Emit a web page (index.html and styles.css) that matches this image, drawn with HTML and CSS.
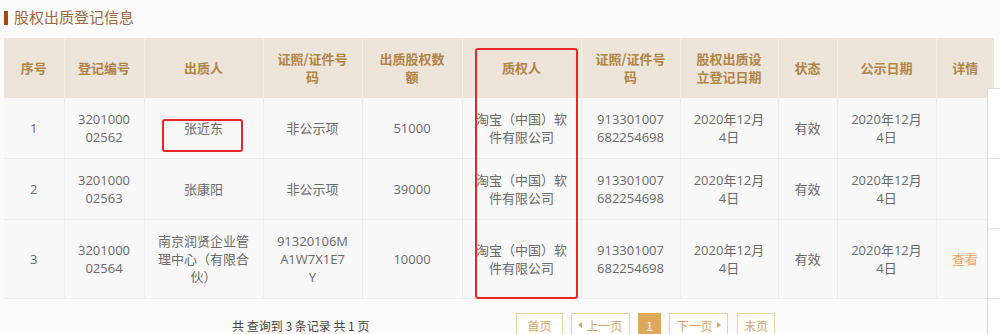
FILE: index.html
```html
<!DOCTYPE html>
<html lang="zh-CN">
<head>
<meta charset="utf-8">
<title>股权出质登记信息</title>
<link rel="stylesheet" href="styles.css">
</head>
<body>
<div class="page">
  <h2 class="title"><span class="bar"></span>股权出质登记信息</h2>
  <table class="grid">
    <colgroup>
      <col style="width:60px"><col style="width:80px"><col style="width:119px"><col style="width:99px"><col style="width:100px"><col style="width:119px"><col style="width:99px"><col style="width:98px"><col style="width:59px"><col style="width:99px"><col style="width:58px">
    </colgroup>
    <thead>
      <tr>
        <th>序号</th><th>登记编号</th><th>出质人</th><th>证照/证件号<br>码</th><th>出质股权数<br>额</th><th>质权人</th><th>证照/证件号<br>码</th><th>股权出质设<br>立登记日期</th><th>状态</th><th>公示日期</th><th>详情</th>
      </tr>
    </thead>
    <tbody>
      <tr>
        <td>1</td><td>3201000<br>02562</td><td>张近东</td><td>非公示项</td><td>51000</td><td>淘宝（中国）软<br>件有限公司</td><td>913301007<br>682254698</td><td>2020年12月<br>4日</td><td>有效</td><td>2020年12月<br>4日</td><td></td>
      </tr>
      <tr>
        <td>2</td><td>3201000<br>02563</td><td>张康阳</td><td>非公示项</td><td>39000</td><td>淘宝（中国）软<br>件有限公司</td><td>913301007<br>682254698</td><td>2020年12月<br>4日</td><td>有效</td><td>2020年12月<br>4日</td><td></td>
      </tr>
      <tr>
        <td>3</td><td>3201000<br>02564</td><td>南京润贤企业管<br>理中心（有限合<br>伙）</td><td>91320106M<br>A1W7X1E7<br>Y</td><td>10000</td><td>淘宝（中国）软<br>件有限公司</td><td>913301007<br>682254698</td><td>2020年12月<br>4日</td><td>有效</td><td>2020年12月<br>4日</td><td><a class="view" href="#">查看</a></td>
      </tr>
    </tbody>
  </table>
  <div class="footer">
    <span class="info">共 查询到 3 条记录 共 1 页</span>
    <div class="pager">
      <a class="btn btn-first" href="#">首页</a>
      <a class="btn btn-step" href="#"><span class="tri tri-l"></span>上一页</a>
      <a class="btn current" href="#">1</a>
      <a class="btn btn-step" href="#">下一页<span class="tri tri-r"></span></a>
      <a class="btn btn-last" href="#">末页</a>
    </div>
  </div>
</div>
<div class="side-panel">
  <div class="side-row"></div>
  <div class="side-row"></div>
  <div class="side-row"></div>
</div>
<div class="mark mark-person"></div>
<div class="mark mark-pledgee"></div>
</body>
</html>
```

FILE: styles.css
```css
html, body {
  margin: 0;
  padding: 0;
  background: #fbfbfb;
  font-family: "Open Sans", "Noto Sans CJK SC", sans-serif;
  color: #666;
  overflow: hidden;
}

.page {
  padding: 0 6px 0 4px;
}

.title {
  margin: 0;
  height: 38px;
  display: flex;
  align-items: flex-start;
  padding-top: 7px;
  box-sizing: border-box;
  font-size: 15px;
  font-weight: normal;
  color: #9a6a44;
  font-family: "Noto Sans CJK SC", sans-serif;
  line-height: 20px;
}

.title .bar {
  display: inline-block;
  width: 4px;
  height: 14px;
  margin-top: 4px;
  margin-right: 6px;
  background: #a24a10;
}

.grid {
  width: 990px;
  table-layout: fixed;
  border-collapse: collapse;
  font-size: 13px;
  line-height: 18px;
}

.grid th {
  background: #ede4da;
  color: #b08546;
  font-weight: bold;
  font-family: "Noto Sans CJK SC", sans-serif;
  height: 60px;
  padding: 0 6px;
  border-left: 1px solid #f5efe9;
  text-align: center;
  vertical-align: middle;
  box-sizing: border-box;
}

.grid th:first-child {
  border-left: none;
}

.grid td {
  background: #f8f8f8;
  color: #6a6a6a;
  padding: 12px 6px;
  border: 1px solid #ececec;
  border-top: none;
  text-align: center;
  vertical-align: middle;
}

.grid tbody tr:first-child td {
  height: 35px;
}

.grid td:first-child { border-left: none; }

.view {
  color: #f5a55a;
  text-decoration: none;
}

.footer {
  display: flex;
  align-items: center;
  margin-top: 14px;
  padding-left: 228px;
}

.info {
  font-size: 12px;
  color: #444;
  font-family: "Noto Sans CJK SC", sans-serif;
  width: 284px;
}

.pager {
  display: flex;
  gap: 8px;
}

.btn {
  display: flex;
  align-items: center;
  justify-content: center;
  height: 24px;
  padding: 0 8px;
  border: 1px solid #ebcfa7;
  color: #d4a566;
  background: #fff;
  font-size: 12px;
  font-family: "Noto Sans CJK SC", sans-serif;
  text-decoration: none;
  box-sizing: border-box;
}

.btn-first {
  width: 47px;
}

.btn-step {
  width: 59px;
  padding: 0;
}

.btn-last {
  width: 38px;
  padding: 0;
  margin-left: 1px;
}

.btn.current {
  background: #dca95c;
  border-color: #dca95c;
  color: #fff;
  width: 23px;
  padding: 0;
}

.tri {
  display: inline-block;
  width: 0;
  height: 0;
  border-top: 3px solid transparent;
  border-bottom: 3px solid transparent;
}

.tri-l {
  border-right: 4px solid #d4a566;
  margin-right: 4px;
}

.tri-r {
  border-left: 4px solid #d4a566;
  margin-left: 4px;
}

.side-panel {
  position: absolute;
  left: 987px;
  top: 88px;
  width: 20px;
  height: 260px;
  background: #fff;
  border-left: 1px solid #dadada;
  border-top: 1px solid #dadada;
}

.side-row {
  height: 69px;
  border-bottom: 1px solid #e6e6e6;
}

.mark {
  position: absolute;
  border: 2px solid #e8262a;
  border-radius: 3px;
  box-sizing: border-box;
}

.mark-person {
  left: 162px;
  top: 119px;
  width: 81px;
  height: 33px;
}

.mark-pledgee {
  left: 475px;
  top: 48px;
  width: 103px;
  height: 251px;
}
```
